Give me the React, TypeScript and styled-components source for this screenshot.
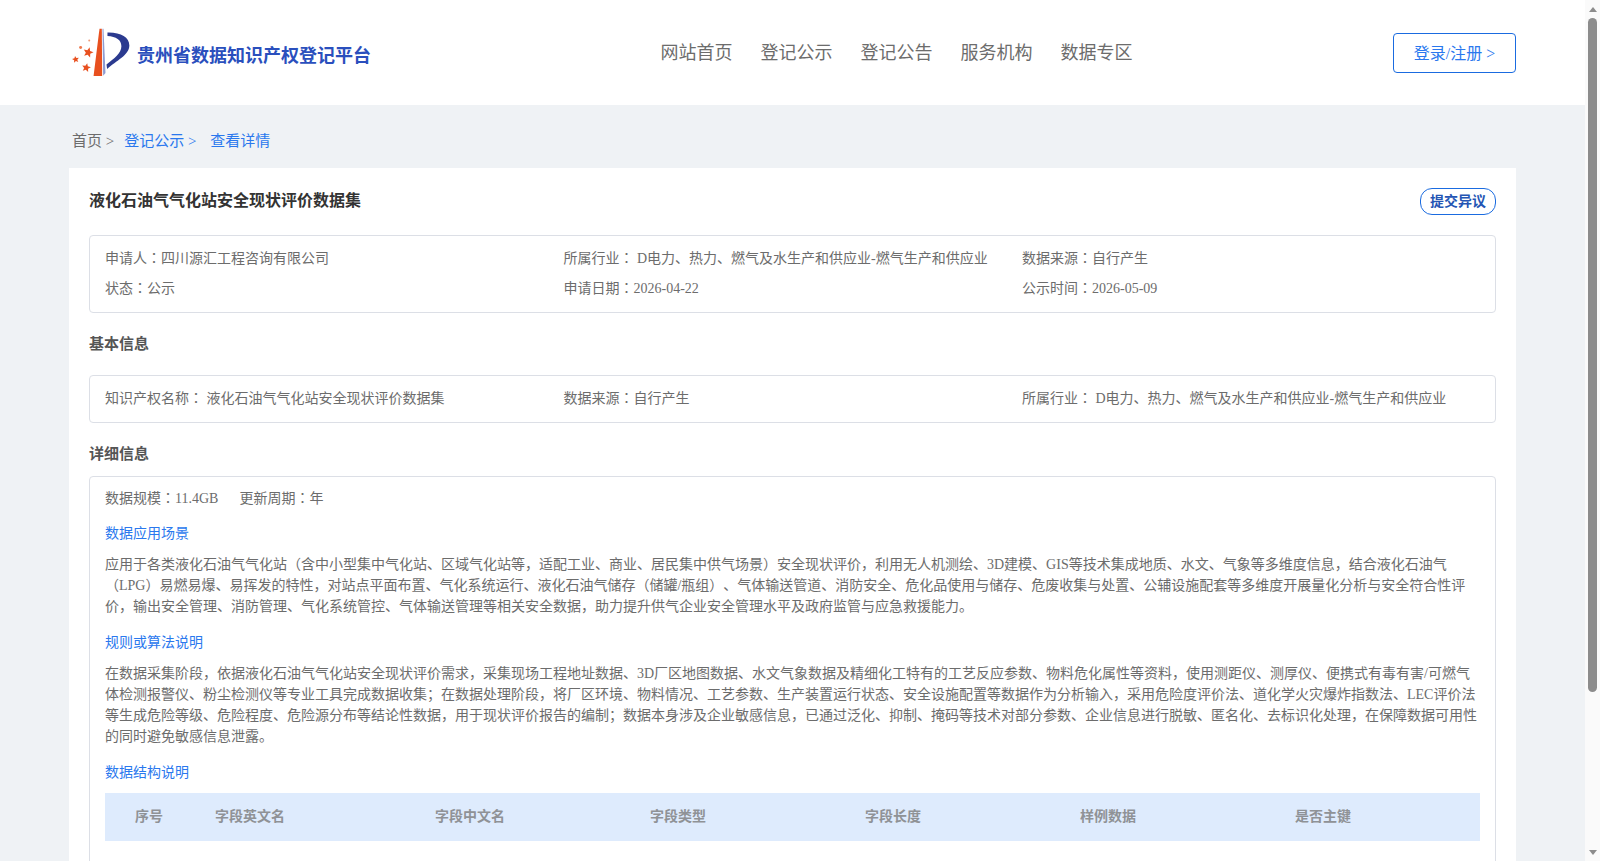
import React from 'react';
import styled, { createGlobalStyle } from 'styled-components';

const GlobalStyle = createGlobalStyle`
  html, body {
    margin: 0;
    padding: 0;
    background: #eff2f5;
    font-family: "Liberation Serif", "Noto Sans CJK SC", serif;
    text-spacing-trim: space-all;
  }
`;

const Shell = styled.div`
  display: flex;
  height: 100vh;
  overflow: hidden;
`;

const Page = styled.div`
  flex: 1;
  min-width: 0;
  overflow: hidden;
`;

/* the browser's scrollbar does not show in the photo, so it is drawn */
const ScrollRail = styled.div`
  width: 15px;
  flex: none;
  background: #fafafa;
  display: flex;
  flex-direction: column;
  align-items: center;
`;

const ArrowSlot = styled.div`
  height: 18px;
  flex: none;
  display: flex;
  align-items: center;
  justify-content: center;
`;

const Arrow = styled.div<{ $down?: boolean }>`
  width: 0;
  height: 0;
  border-left: 4.5px solid transparent;
  border-right: 4.5px solid transparent;
  ${({ $down }) => ($down ? 'border-top: 5px solid #8c8c8c;' : 'border-bottom: 5px solid #8c8c8c;')}
`;

const RailTrack = styled.div`
  flex: 1;
  width: 100%;
  display: flex;
  justify-content: center;
`;

const Thumb = styled.div`
  width: 9px;
  height: 674px;
  background: #8c8c8c;
  border-radius: 5px;
`;

const Header = styled.header`
  height: 105px;
  background: #fff;
`;

const HeaderInner = styled.div`
  width: 1447px;
  height: 100%;
  margin: 0 auto;
  display: flex;
  align-items: center;
  justify-content: space-between;
`;

const Brand = styled.div`
  display: flex;
  align-items: center;
  gap: 7px;
  width: 329px;
  margin-left: 2px;
`;

const LogoMark = styled.svg`
  flex: none;
`;

const BrandName = styled.span`
  font-size: 18px;
  font-weight: 700;
  color: #2a4fbd;
  white-space: nowrap;
  margin-top: 2px;
`;

const Nav = styled.nav`
  display: flex;
  gap: 28px;
  margin-bottom: 4px;
`;

const NavLink = styled.a`
  font-size: 18px;
  color: #6c6c6c;
`;

const LoginButton = styled.a`
  box-sizing: border-box;
  width: 123px;
  height: 40px;
  padding-bottom: 2px;
  display: flex;
  align-items: center;
  justify-content: center;
  border: 1px solid #1a6be0;
  border-radius: 4px;
  font-size: 16px;
  color: #2a78ee;
`;

const Main = styled.main`
  width: 1447px;
  margin: 0 auto;
`;

const Crumbs = styled.div`
  height: 63px;
  display: flex;
  align-items: center;
  font-size: 15px;
  padding: 5px 0 0 3px;
  box-sizing: border-box;
`;

const Crumb = styled.span<{ $active?: boolean }>`
  color: ${({ $active }) => ($active ? '#2a78ee' : '#6c6c6c')};
  margin-right: 10px;
  white-space: pre;
`;

const Card = styled.section`
  background: #fff;
  padding: 20px 20px 0 20px;
  box-sizing: border-box;
`;

const TitleRow = styled.div`
  display: flex;
  justify-content: space-between;
  align-items: flex-start;
  height: 47px;
`;

const Title = styled.h1`
  margin: 0;
  font-size: 16px;
  line-height: 25px;
  font-weight: 700;
  color: #333;
`;

const ObjectionButton = styled.a`
  box-sizing: border-box;
  width: 76px;
  height: 27px;
  padding-bottom: 3px;
  display: flex;
  align-items: center;
  justify-content: center;
  border: 1px solid #1a6be0;
  border-radius: 12px;
  font-size: 14px;
  font-weight: 700;
  color: #2455b4;
`;

const Panel = styled.div`
  border: 1px solid #dcdfe6;
  border-radius: 4px;
  padding: 8px 15px;
  font-size: 14px;
  line-height: 30px;
  color: #6c6c6c;
`;

const DetailPanel = styled(Panel)`
  padding-bottom: 120px;
`;

const InfoGrid = styled.div`
  display: grid;
  grid-template-columns: 458.5px 458.5px 1fr;
`;

const SectionTitle = styled.h2<{ $tight?: boolean }>`
  margin: 0;
  font-size: 15px;
  font-weight: 700;
  line-height: 24px;
  color: #555;
  padding: 19px 0 ${({ $tight }) => ($tight ? '10px' : '19px')};
`;

const MetaRow = styled.div`
  display: flex;
  gap: 21px;
  height: 19px;
  line-height: 20px;
  margin-top: 4px;
`;

const SubTitle = styled.div`
  font-size: 14px;
  line-height: 20px;
  color: #2a78ee;
  margin-top: 16px;
`;

const Paragraph = styled.p`
  margin: 10px 0 0;
  line-height: 21px;
  font-size: 14px;
  color: #6c6c6c;
`;

const FieldHead = styled.div`
  display: grid;
  grid-template-columns: 80px 220px 215px 215px 215px 215px 1fr;
  background: #deebfd;
  height: 48px;
  align-items: center;
  margin-top: 10px;
`;

const FieldLabel = styled.div`
  font-size: 14px;
  font-weight: 700;
  color: #8f9296;
  padding-left: 30px;
`;

/* these marks sit centred in the picture, and only the TC face draws them so */
const Mark = styled.span`
  font-family: "Liberation Serif", "Noto Sans CJK TC", serif;
`;

function withMarks(text: string) {
  return text.split(/([，：；])/).map((part, i) => (i % 2 ? <Mark key={i}>{part}</Mark> : part));
}

const fields = ['序号', '字段英文名', '字段中文名', '字段类型', '字段长度', '样例数据', '是否主键'];

const scene =
  '应用于各类液化石油气气化站（含中小型集中气化站、区域气化站等，适配工业、商业、居民集中供气场景）安全现状评价，利用无人机测绘、3D建模、GIS等技术集成地质、水文、气象等多维度信息，结合液化石油气（LPG）易燃易爆、易挥发的特性，对站点平面布置、气化系统运行、液化石油气储存（储罐/瓶组）、气体输送管道、消防安全、危化品使用与储存、危废收集与处置、公辅设施配套等多维度开展量化分析与安全符合性评价，输出安全管理、消防管理、气化系统管控、气体输送管理等相关安全数据，助力提升供气企业安全管理水平及政府监管与应急救援能力。';

const rules =
  '在数据采集阶段，依据液化石油气气化站安全现状评价需求，采集现场工程地址数据、3D厂区地图数据、水文气象数据及精细化工特有的工艺反应参数、物料危化属性等资料，使用测距仪、测厚仪、便携式有毒有害/可燃气体检测报警仪、粉尘检测仪等专业工具完成数据收集；在数据处理阶段，将厂区环境、物料情况、工艺参数、生产装置运行状态、安全设施配置等数据作为分析输入，采用危险度评价法、道化学火灾爆炸指数法、LEC评价法等生成危险等级、危险程度、危险源分布等结论性数据，用于现状评价报告的编制；数据本身涉及企业敏感信息，已通过泛化、抑制、掩码等技术对部分参数、企业信息进行脱敏、匿名化、去标识化处理，在保障数据可用性的同时避免敏感信息泄露。';

function starPoints(cx: number, cy: number, r: number, turn: number) {
  const pts: string[] = [];
  for (let i = 0; i < 10; i++) {
    const rad = i % 2 ? r * 0.45 : r;
    const a = ((-90 + turn + i * 36) * Math.PI) / 180;
    pts.push(`${(cx + rad * Math.cos(a)).toFixed(1)},${(cy + rad * Math.sin(a)).toFixed(1)}`);
  }
  return pts.join(' ');
}

function Logo() {
  return (
    <LogoMark width="59" height="51" viewBox="10 10 178 152">
      <path d="M96 14 L103 14 L104 157 L78 157 Z" fill="#e8501f" />
      <path d="M105 14 L108 14 L114 148 L107 156 Z" fill="#8f9cd2" />
      <path
        d="M120 26 C160 25 186 40 186 65 C186 94 146 111 119 136 L117 122 C140 104 162 88 162 67 C162 47 146 38 120 36 Z"
        fill="#2b3a8f"
      />
      <polygon points={starPoints(62, 86, 16, 15)} fill="#e8501f" />
      <polygon points={starPoints(24, 107, 11, -10)} fill="#e8501f" />
      <polygon points={starPoints(56, 132, 14, 12)} fill="#e8501f" />
      <circle cx="39" cy="71" r="4.500" fill="#ee7a50" />
      <circle cx="65" cy="50" r="3" fill="#ee9a78" />
    </LogoMark>
  );
}

export default function App() {
  return (
    <>
      <GlobalStyle />
      <Shell>
        <Page>
          <Header>
            <HeaderInner>
              <Brand>
                <Logo />
                <BrandName>贵州省数据知识产权登记平台</BrandName>
              </Brand>
              <Nav>
                <NavLink>网站首页</NavLink>
                <NavLink>登记公示</NavLink>
                <NavLink>登记公告</NavLink>
                <NavLink>服务机构</NavLink>
                <NavLink>数据专区</NavLink>
              </Nav>
              <LoginButton>登录/注册 &gt;</LoginButton>
            </HeaderInner>
          </Header>
          <Main>
            <Crumbs>
              <Crumb>首页 &gt;</Crumb>
              <Crumb $active>登记公示 &gt;</Crumb>
              <Crumb $active> 查看详情</Crumb>
            </Crumbs>
            <Card>
              <TitleRow>
                <Title>液化石油气气化站安全现状评价数据集</Title>
                <ObjectionButton>提交异议</ObjectionButton>
              </TitleRow>
              <Panel>
                <InfoGrid>
                  <span>{withMarks('申请人：四川源汇工程咨询有限公司')}</span>
                  <span>{withMarks('所属行业： D电力、热力、燃气及水生产和供应业-燃气生产和供应业')}</span>
                  <span>{withMarks('数据来源：自行产生')}</span>
                  <span>{withMarks('状态：公示')}</span>
                  <span>{withMarks('申请日期：2026-04-22')}</span>
                  <span>{withMarks('公示时间：2026-05-09')}</span>
                </InfoGrid>
              </Panel>
              <SectionTitle>基本信息</SectionTitle>
              <Panel>
                <InfoGrid>
                  <span>{withMarks('知识产权名称： 液化石油气气化站安全现状评价数据集')}</span>
                  <span>{withMarks('数据来源：自行产生')}</span>
                  <span>{withMarks('所属行业： D电力、热力、燃气及水生产和供应业-燃气生产和供应业')}</span>
                </InfoGrid>
              </Panel>
              <SectionTitle $tight>详细信息</SectionTitle>
              <DetailPanel>
                <MetaRow>
                  <span>{withMarks('数据规模：11.4GB')}</span>
                  <span>{withMarks('更新周期：年')}</span>
                </MetaRow>
                <SubTitle>数据应用场景</SubTitle>
                <Paragraph>{scene}</Paragraph>
                <SubTitle>规则或算法说明</SubTitle>
                <Paragraph>{rules}</Paragraph>
                <SubTitle>数据结构说明</SubTitle>
                <FieldHead>
                  {fields.map((f) => (
                    <FieldLabel key={f}>{f}</FieldLabel>
                  ))}
                </FieldHead>
              </DetailPanel>
            </Card>
          </Main>
        </Page>
        <ScrollRail>
          <ArrowSlot>
            <Arrow />
          </ArrowSlot>
          <RailTrack>
            <Thumb />
          </RailTrack>
          <ArrowSlot>
            <Arrow $down />
          </ArrowSlot>
        </ScrollRail>
      </Shell>
    </>
  );
}
